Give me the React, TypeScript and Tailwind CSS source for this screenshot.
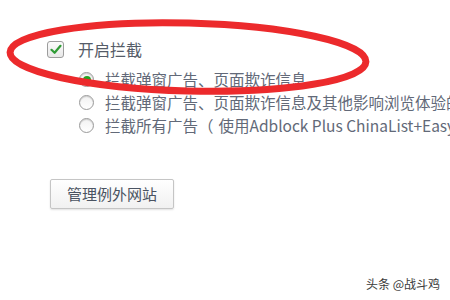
import React from "react";

const font = '"Noto Sans CJK SC", "Open Sans", sans-serif';

function Radio({ checked }: { checked?: boolean }) {
  return (
    <span className="relative flex h-[15px] w-[15px] shrink-0 items-center justify-center rounded-full border border-[#9a9a9a] bg-gradient-to-b from-[#f2f2f2] to-white shadow-[inset_0_1px_1px_rgba(0,0,0,0.15)]">
      {checked && <span className="h-[8px] w-[8px] rounded-full bg-[#22a422]" />}
    </span>
  );
}

export default function App() {
  return (
    <div
      className="relative h-[300px] w-[450px] overflow-hidden bg-white text-[#626978]"
      style={{ fontFamily: font }}
    >
      <div className="flex flex-col pl-[47px] pt-[41px]">
        <div className="flex h-[17px] items-center gap-[14px]">
          <span className="flex h-[17px] w-[17px] items-center justify-center rounded-[3px] border border-[#9c9c9c] bg-gradient-to-b from-[#fbfbfb] to-[#e8e8e8]">
            <svg width="12" height="11" viewBox="0 0 12 11">
              <path d="M1.5 5.8 L4.6 8.8 L10.5 1.8" fill="none" stroke="#2f9b35" strokeWidth="2.2" strokeLinecap="round" strokeLinejoin="round" />
            </svg>
          </span>
          <span className="whitespace-nowrap text-[16px] leading-[17px] text-[#555c68]">开启拦截</span>
        </div>
        <div className="ml-[32px] mt-[10px] flex flex-col">
          <div className="flex h-[23px] items-center gap-[11px] whitespace-nowrap text-[15.5px]">
            <Radio checked />
            <span>拦截弹窗广告、页面欺诈信息</span>
          </div>
          <div className="flex h-[23px] items-center gap-[11px] whitespace-nowrap text-[15.5px]">
            <Radio />
            <span>拦截弹窗广告、页面欺诈信息及其他影响浏览体验的广告</span>
          </div>
          <div className="flex h-[23px] items-center gap-[11px] whitespace-nowrap text-[15.5px]">
            <Radio />
            <span>
              拦截所有广告<span className="mr-[5px]">（</span>使用Adblock Plus ChinaList+EasyList规则）
            </span>
          </div>
        </div>
        <div className="ml-[3px] mt-[42px] flex">
          <button className="flex h-[30px] w-[124px] items-center justify-center rounded-[2px] border border-[#c5c5c5] bg-gradient-to-b from-white to-[#f1f1f1] text-[15px] text-[#4a5361] shadow-[0_1px_2px_rgba(0,0,0,0.12)]">
            管理例外网站
          </button>
        </div>
      </div>

      <svg className="pointer-events-none absolute left-0 top-0" width="450" height="300">
        <ellipse cx="188" cy="57" rx="178" ry="34" fill="none" stroke="#ec2a2c" strokeWidth="7" transform="rotate(1.5 188 57)" />
      </svg>

      <div
        className="absolute bottom-[7px] right-[10px] whitespace-nowrap text-[12px] text-[#3a3a3a]"
        style={{ textShadow: "0 0 2px #fff, 0 0 1px #fff" }}
      >
        头条 @战斗鸡
      </div>
    </div>
  );
}
